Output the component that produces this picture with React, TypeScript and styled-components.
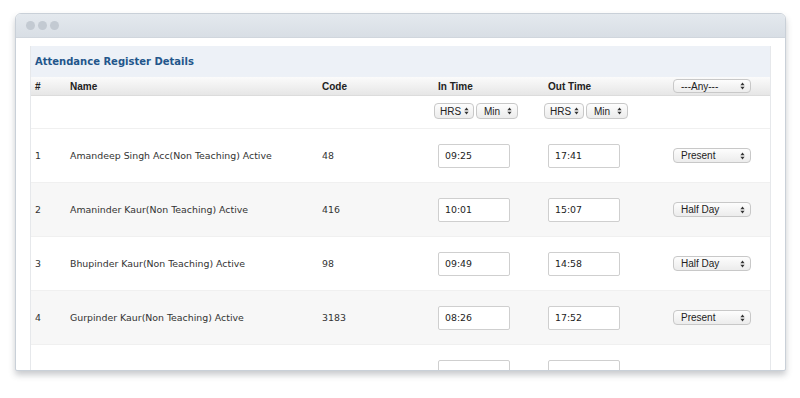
import styled, { createGlobalStyle } from "styled-components";

const GlobalStyle = createGlobalStyle`
  html, body {
    margin: 0;
    padding: 0;
    background: #ffffff;
  }
  * {
    box-sizing: border-box;
  }
`;

type Entry = {
  id: number;
  name: string;
  code: string;
  inTime: string;
  outTime: string;
  status: string;
};

const entries: Entry[] = [
  { id: 1, name: "Amandeep Singh Acc(Non Teaching) Active", code: "48", inTime: "09:25", outTime: "17:41", status: "Present" },
  { id: 2, name: "Amaninder Kaur(Non Teaching) Active", code: "416", inTime: "10:01", outTime: "15:07", status: "Half Day" },
  { id: 3, name: "Bhupinder Kaur(Non Teaching) Active", code: "98", inTime: "09:49", outTime: "14:58", status: "Half Day" },
  { id: 4, name: "Gurpinder Kaur(Non Teaching) Active", code: "3183", inTime: "08:26", outTime: "17:52", status: "Present" },
  { id: 5, name: "", code: "", inTime: "", outTime: "", status: "" },
];

function Arrows() {
  return (
    <ArrowIcon width="5" height="8" viewBox="0 0 5 8">
      <path d="M2.5 0.5 L4.6 3.2 L0.4 3.2 Z" fill="#333" />
      <path d="M2.5 7.5 L4.6 4.8 L0.4 4.8 Z" fill="#333" />
    </ArrowIcon>
  );
}

function Select({ label, width, height, tight }: { label: string; width: number; height: number; tight?: boolean }) {
  return (
    <SelectBox $w={width} $h={height} $tight={!!tight}>
      <SelectText>{label}</SelectText>
      <Arrows />
    </SelectBox>
  );
}

function App() {
  return (
    <Page>
      <GlobalStyle />
      <Window>
        <TitleBar>
          <Dot />
          <Dot />
          <Dot />
        </TitleBar>
        <Body>
          <Panel>
            <PanelTitle>Attendance Register Details</PanelTitle>
            <HeadRow>
              <span>#</span>
              <span>Name</span>
              <span>Code</span>
              <span>In Time</span>
              <span>Out Time</span>
              <Select label="---Any---" width={78} height={14} />
            </HeadRow>
            <FilterRow>
              <span />
              <span />
              <span />
              <Pair>
                <Select label="HRS" width={40} height={16} tight />
                <Select label="Min" width={42} height={16} />
              </Pair>
              <Pair>
                <Select label="HRS" width={40} height={16} tight />
                <Select label="Min" width={42} height={16} />
              </Pair>
              <span />
            </FilterRow>
            {entries.map((e) => (
              <Row key={e.id} $alt={e.id % 2 === 0}>
                <span>{e.id < 5 ? e.id : ""}</span>
                <span>{e.name}</span>
                <span>{e.code}</span>
                <TimeInput>{e.inTime}</TimeInput>
                <TimeInput>{e.outTime}</TimeInput>
                <span>{e.status && <Select label={e.status} width={78} height={15} />}</span>
              </Row>
            ))}
          </Panel>
        </Body>
      </Window>
    </Page>
  );
}

const Page = styled.div`
  width: 800px;
  height: 398px;
  padding: 13px 14px 0 15px;
  font-family: "DejaVu Sans", Verdana, sans-serif;
  color: #333;
`;

const Window = styled.div`
  width: 771px;
  height: 358px;
  display: flex;
  flex-direction: column;
  border: 1px solid #c9d0d8;
  border-radius: 6px 6px 2px 2px;
  background: #fff;
  box-shadow: 0 4px 6px rgba(60, 70, 80, 0.28);
  overflow: hidden;
`;

const TitleBar = styled.div`
  height: 24px;
  flex-shrink: 0;
  display: flex;
  align-items: center;
  gap: 3px;
  padding-left: 10px;
  background: linear-gradient(#e4e9ee, #d8dee5);
  border-bottom: 1px solid #d0d6dd;
`;

const Dot = styled.span`
  width: 9px;
  height: 9px;
  border-radius: 50%;
  background: #c3cad2;
`;

const Body = styled.div`
  flex: 1;
  overflow: hidden;
  padding: 8px 14px 0 14px;
`;

const Panel = styled.div`
  border-left: 1px solid #e6e8eb;
  border-right: 1px solid #e6e8eb;
`;

const PanelTitle = styled.div`
  height: 31px;
  display: flex;
  align-items: center;
  padding-left: 4px;
  background: #edf1f7;
  color: #23568b;
  font-weight: bold;
  font-size: 10px;
`;

const Columns = styled.div`
  display: grid;
  grid-template-columns: 35px 252px 116px 110px 125px 1fr;
  align-items: center;
  padding-left: 4px;
`;

const HeadRow = styled(Columns)`
  height: 19px;
  background: linear-gradient(#fbfbfb, #e6e6e6);
  border-bottom: 1px solid #dcdcdc;
  font-family: "Liberation Sans", Arial, sans-serif;
  font-weight: bold;
  font-size: 10px;
  color: #222;
`;

const FilterRow = styled(Columns)`
  height: 32px;
  align-items: start;
  padding-top: 7px;
`;

const Pair = styled.div`
  display: flex;
  gap: 2px;
  margin-left: -4px;
`;

const Row = styled(Columns)<{ $alt: boolean }>`
  height: 54px;
  font-size: 9.4px;
  background: ${(p) => (p.$alt ? "#f7f7f7" : "#ffffff")};
  border-top: 1px solid #f0f0f0;
  color: #333;
`;

const TimeInput = styled.div`
  width: 72px;
  height: 24px;
  display: flex;
  align-items: center;
  padding-left: 6px;
  background: #fff;
  border: 1px solid #cfcfcf;
  border-radius: 2px;
  font-size: 9.4px;
  color: #222;
`;

const SelectBox = styled.div<{ $w: number; $h: number; $tight: boolean }>`
  width: ${(p) => p.$w}px;
  height: ${(p) => p.$h}px;
  display: flex;
  align-items: center;
  justify-content: space-between;
  gap: 2px;
  padding: ${(p) => (p.$tight ? "0 4px 0 5px" : "0 5px 0 7px")};
  border: 1px solid #c8c8c8;
  border-radius: 4px;
  background: linear-gradient(#fdfdfd, #ececec);
  font-family: "Liberation Sans", Arial, sans-serif;
  font-weight: normal;
  font-size: 10px;
  color: #222;
`;

const SelectText = styled.span`
  white-space: nowrap;
`;

const ArrowIcon = styled.svg`
  flex-shrink: 0;
`;

export default App;
